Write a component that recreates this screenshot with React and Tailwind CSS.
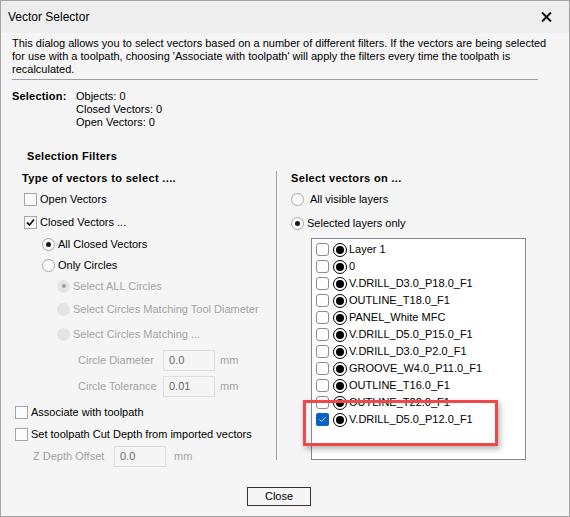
const layers = [
  "Layer 1",
  "0",
  "V.DRILL_D3.0_P18.0_F1",
  "OUTLINE_T18.0_F1",
  "PANEL_White MFC",
  "V.DRILL_D5.0_P15.0_F1",
  "V.DRILL_D3.0_P2.0_F1",
  "GROOVE_W4.0_P11.0_F1",
  "OUTLINE_T16.0_F1",
  "OUTLINE_T22.0_F1",
  "V.DRILL_D5.0_P12.0_F1",
];

function CheckBox({ checked }) {
  return (
    <span className="flex h-[13px] w-[13px] shrink-0 items-center justify-center border border-[#a6a6a6] bg-[#fbfbfb]">
      {checked && (
        <svg width="9" height="9" viewBox="0 0 9 9">
          <path d="M1 4.5 L3.5 7 L8 1.5" fill="none" stroke="#111" strokeWidth="1.8" />
        </svg>
      )}
    </span>
  );
}

function Radio({ checked, disabled }) {
  if (disabled) {
    return (
      <span className="flex h-[13px] w-[13px] shrink-0 items-center justify-center rounded-full bg-[#e4e4e4]">
        {checked && <span className="h-[4px] w-[4px] rounded-full bg-[#a0a0a0]" />}
      </span>
    );
  }
  return (
    <span className="flex h-[13px] w-[13px] shrink-0 items-center justify-center rounded-full border border-[#a8a8a8] bg-[#fbfbfb]">
      {checked && <span className="h-[5px] w-[5px] rounded-full bg-[#1a1a1a]" />}
    </span>
  );
}

function Field({ value }) {
  return (
    <span className="flex h-[21px] w-[52px] items-center border border-[#dedede] bg-[#f5f5f5] pl-[5px] text-[#6a6a6a]">
      {value}
    </span>
  );
}

function LayerRow({ name, checked }) {
  return (
    <div className="flex h-[17px] items-center pl-[4px]">
      {checked ? (
        <span className="flex h-[13px] w-[13px] items-center justify-center rounded-[2px] bg-[#0a62c4]">
          <svg width="9" height="9" viewBox="0 0 9 9">
            <path d="M1.5 4.5 L3.5 6.5 L7.5 2.5" fill="none" stroke="#cfe2f7" strokeWidth="1" />
          </svg>
        </span>
      ) : (
        <span className="h-[13px] w-[13px] rounded-[3px] border border-[#8e8e8e] bg-white" />
      )}
      <span className="ml-[4px] flex h-[14px] w-[14px] items-center justify-center rounded-full border-[1.5px] border-black">
        <span className="h-[8px] w-[8px] rounded-full bg-black" />
      </span>
      <span className="ml-[2px]">{name}</span>
    </div>
  );
}

export default function App() {
  return (
    <div className="flex h-[517px] w-[570px] flex-col border border-[#a3a3a3] bg-[#f5f5f5] font-['Liberation_Sans',Arial,sans-serif] text-[11px] text-black">
      {/* title bar */}
      <div className="flex h-[32px] shrink-0 items-center justify-between bg-[#eeeeee] pl-[7px] pr-[17px]">
        <span className="text-[12px]">Vector Selector</span>
        <svg width="11" height="10" viewBox="0 0 11 10">
          <path d="M1 0.5 L10 9.5 M10 0.5 L1 9.5" stroke="#111" strokeWidth="2" />
        </svg>
      </div>

      <div className="px-[11px]">
        <p className="whitespace-nowrap pt-[4px] leading-[13px]">
          This dialog allows you to select vectors based on a number of different filters. If the vectors are being selected
          <br />
          for use with a toolpath, choosing 'Associate with toolpath' will apply the filters every time the toolpath is
          <br />
          recalculated.
        </p>
        <div className="mt-[3px] h-px w-[526px] bg-[#a0a0a0]" />

        <div className="mt-[10px] flex leading-[13px]">
          <span className="w-[64px] font-bold tracking-[0.2px]">Selection:</span>
          <div>
            <div>Objects: 0</div>
            <div>Closed Vectors: 0</div>
            <div>Open Vectors: 0</div>
          </div>
        </div>

        <div className="mt-[20px] pl-[15px] font-bold leading-[14px] tracking-[0.3px]">Selection Filters</div>

        <div className="mt-[8px] flex h-[289px]">
          {/* vector type filters */}
          <div className="w-[265px] shrink-0 border-r border-[#a0a0a0] whitespace-nowrap">
            <div className="flex h-[14px] items-center pl-[10px] font-bold tracking-[0.35px]">Type of vectors to select ....</div>
            <div className="flex h-[28px] items-center gap-[3px] pl-[12px]">
              <CheckBox />
              <span>Open Vectors</span>
            </div>
            <div className="flex h-[18px] items-center gap-[3px] pl-[12px]">
              <CheckBox checked />
              <span>Closed Vectors ...</span>
            </div>
            <div className="flex h-[26px] items-center gap-[3px] pl-[30px]">
              <Radio checked />
              <span>All Closed Vectors</span>
            </div>
            <div className="flex h-[16px] items-center gap-[3px] pl-[30px]">
              <Radio />
              <span>Only Circles</span>
            </div>
            <div className="flex h-[26px] items-center gap-[3px] pl-[45px] text-[#a4a4a4]">
              <Radio disabled checked />
              <span>Select ALL Circles</span>
            </div>
            <div className="flex h-[20px] items-center gap-[3px] pl-[45px] text-[#a4a4a4]">
              <Radio disabled />
              <span>Select Circles Matching Tool Diameter</span>
            </div>
            <div className="flex h-[30px] items-center gap-[3px] pl-[45px] text-[#a4a4a4]">
              <Radio disabled />
              <span>Select Circles Matching ...</span>
            </div>
            <div className="flex h-[22px] items-center pl-[66px] text-[#a4a4a4]">
              <span className="w-[85px]">Circle Diameter</span>
              <Field value="0.0" />
              <span className="ml-[5px]">mm</span>
            </div>
            <div className="flex h-[30px] items-center pl-[66px] text-[#a4a4a4]">
              <span className="w-[85px]">Circle Tolerance</span>
              <Field value="0.01" />
              <span className="ml-[5px]">mm</span>
            </div>
            <div className="flex h-[22px] items-center gap-[3px] pl-[3px]">
              <CheckBox />
              <span>Associate with toolpath</span>
            </div>
            <div className="flex h-[22px] items-center gap-[3px] pl-[3px]">
              <CheckBox />
              <span>Set toolpath Cut Depth from imported vectors</span>
            </div>
            <div className="flex h-[22px] items-center pl-[21px] text-[#a4a4a4]">
              <span className="w-[81px]">Z Depth Offset</span>
              <Field value="0.0" />
              <span className="ml-[8px]">mm</span>
            </div>
          </div>

          {/* layer filters */}
          <div className="relative flex-1 pl-[14px] whitespace-nowrap">
            <div className="flex h-[14px] items-center font-bold tracking-[0.35px]">Select vectors on ...</div>
            <div className="flex h-[28px] items-center gap-[6px]">
              <Radio />
              <span>All visible layers</span>
            </div>
            <div className="flex h-[20px] items-center gap-[3px]">
              <Radio checked />
              <span>Selected layers only</span>
            </div>
            <div className="ml-[20px] mt-[5px] h-[222px] w-[215px] border border-[#828790] bg-white pt-[2px]">
              {layers.map((name, i) => (
                <LayerRow key={name} name={name} checked={i === layers.length - 1} />
              ))}
            </div>
            <div className="absolute left-[26px] top-[229px] h-[46px] w-[195px] border-[3px] border-[#f0474a] shadow-[2px_3px_6px_rgba(0,0,0,0.3)]" />
          </div>
        </div>

        <div className="mt-[27px] pl-[235px]">
          <button className="flex h-[19px] w-[64px] items-center justify-center border border-[#333333] bg-[#f5f5f5]">
            Close
          </button>
        </div>
      </div>
    </div>
  );
}
